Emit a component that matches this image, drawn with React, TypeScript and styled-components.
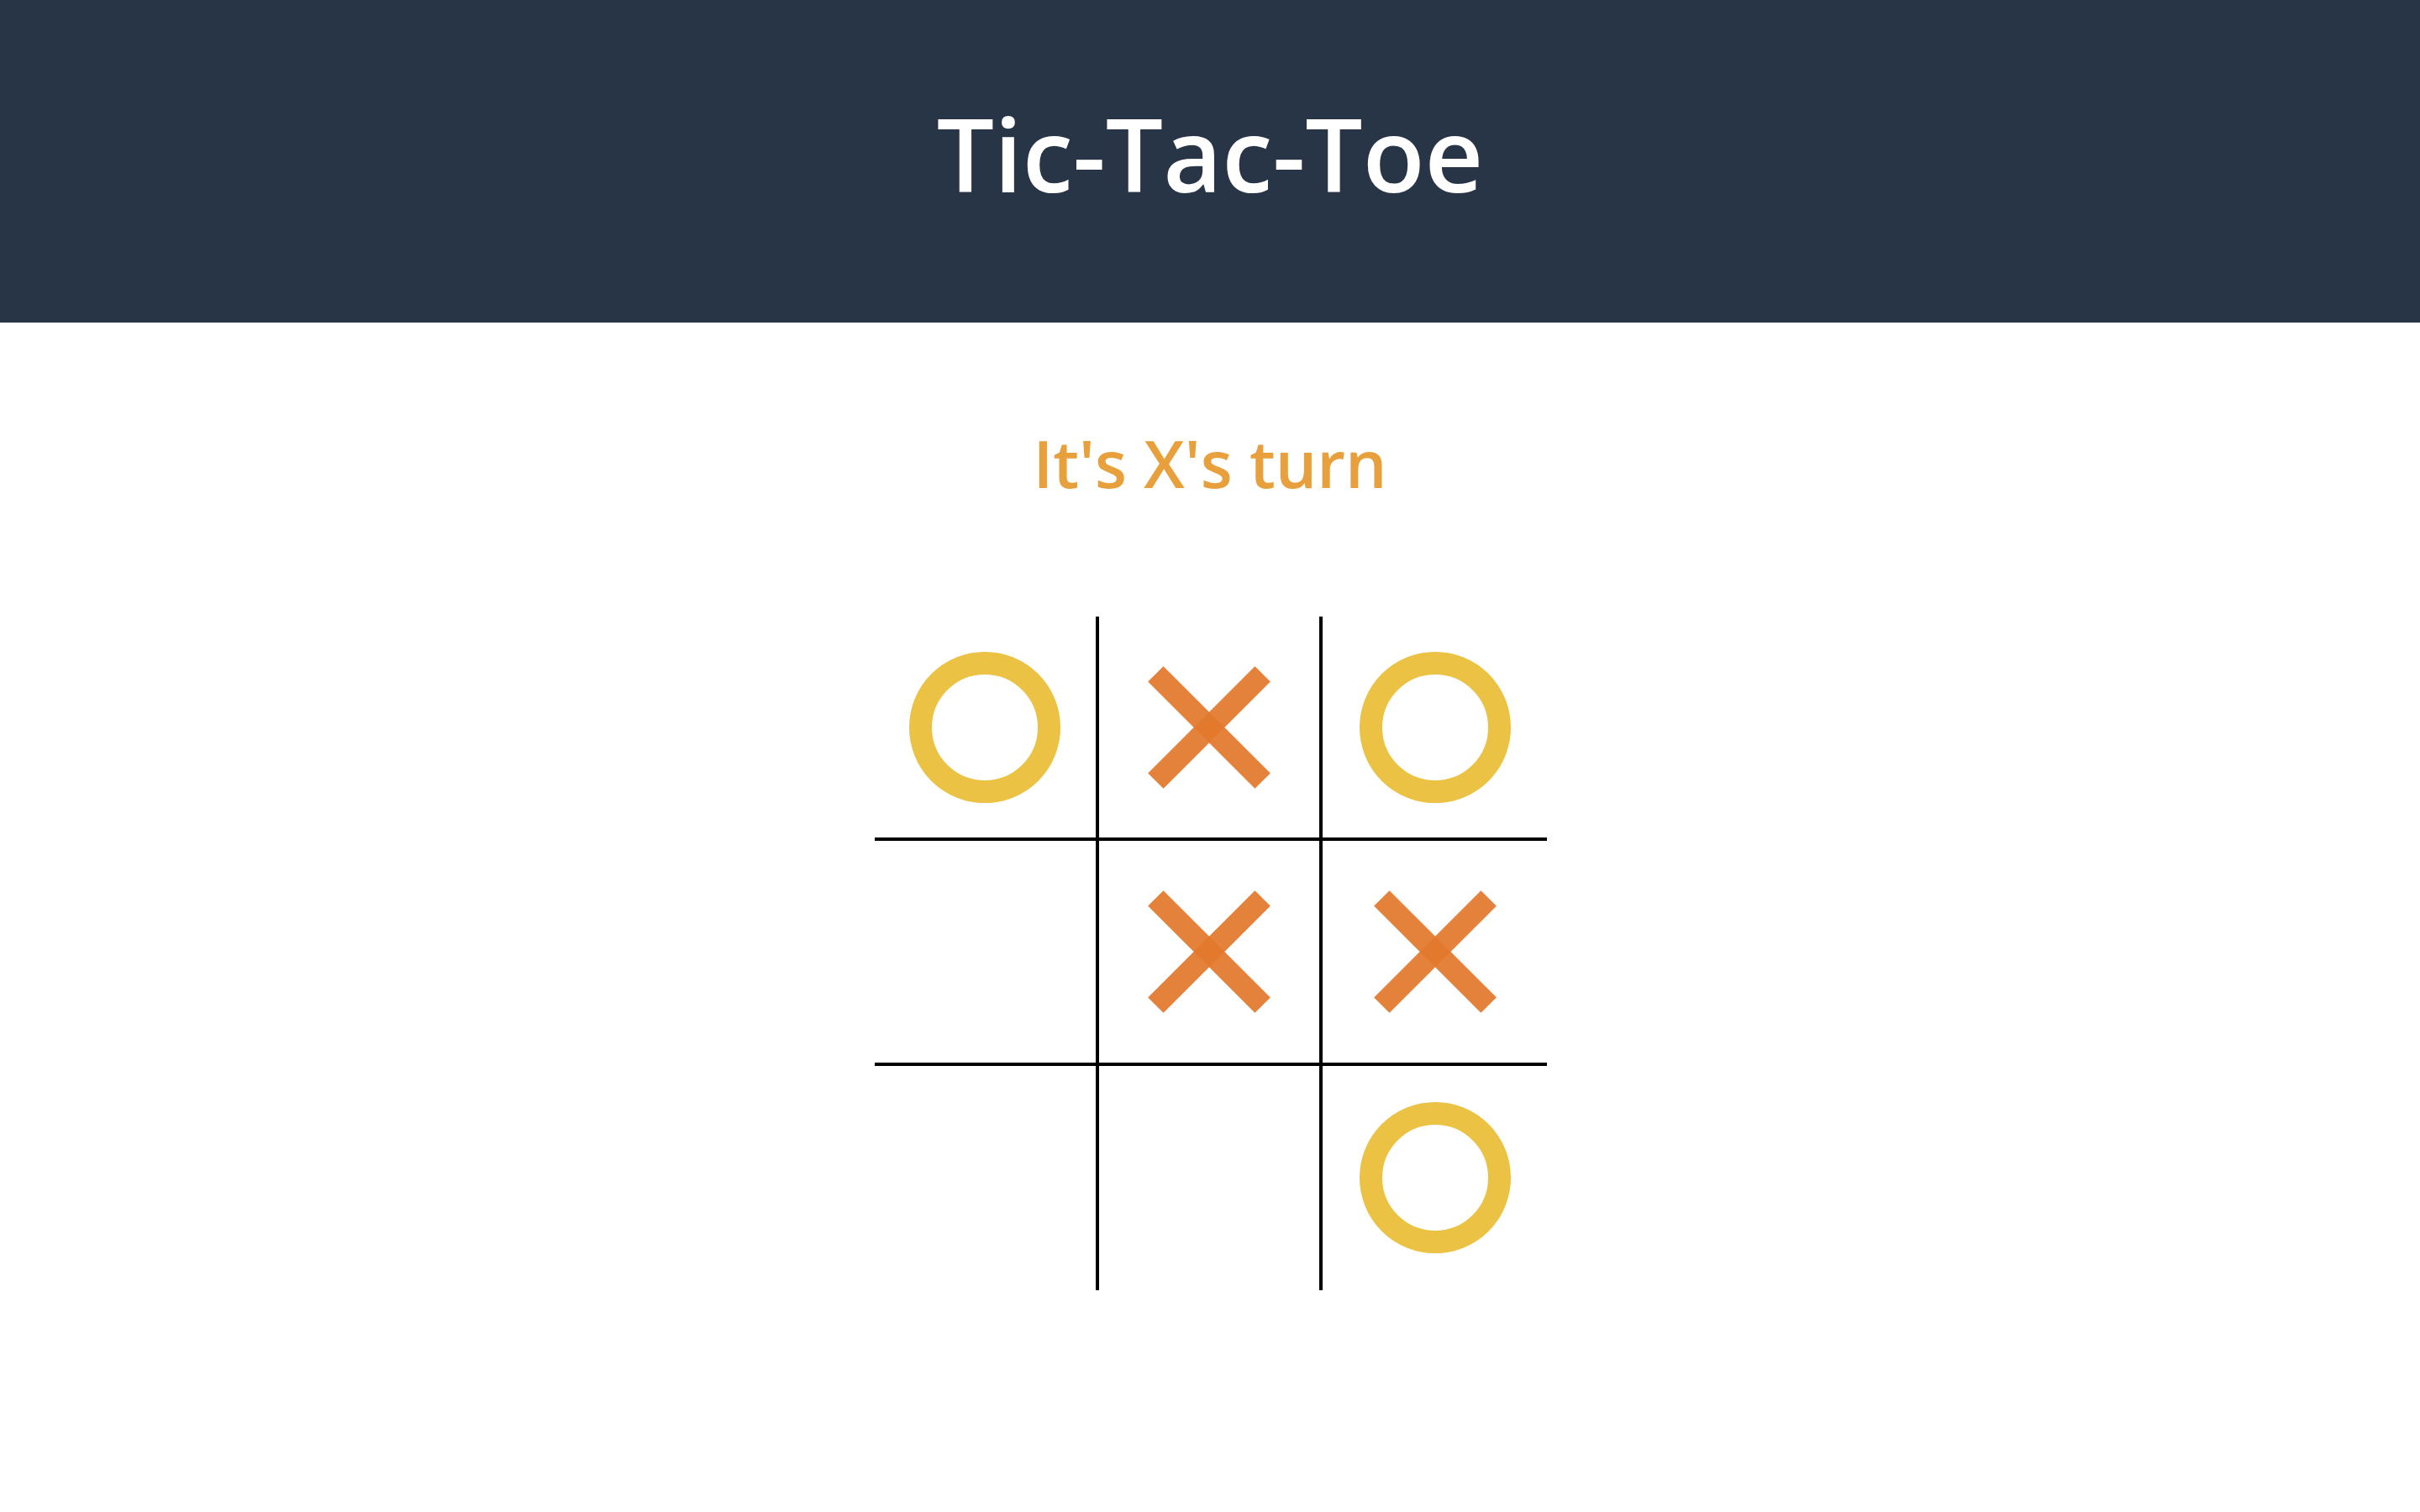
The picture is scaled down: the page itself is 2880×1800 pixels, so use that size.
import React from "react";
import styled, { createGlobalStyle } from "styled-components";

const GlobalStyle = createGlobalStyle`
  html, body {
    margin: 0;
    padding: 0;
    background: #ffffff;
  }
  body {
    font-family: "Open Sans", "Liberation Sans", sans-serif;
  }
`;

const Page = styled.div`
  display: flex;
  flex-direction: column;
  align-items: center;
  min-height: 100vh;
`;

const Header = styled.header`
  align-self: stretch;
  height: 384px;
  box-sizing: border-box;
  padding-top: 100px;
  background: #283546;
  display: flex;
  justify-content: center;
  align-items: flex-start;
`;

const Title = styled.h1`
  margin: 0;
  font-family: "Open Sans", "Liberation Sans", sans-serif;
  font-size: 121px;
  font-weight: 600;
  line-height: normal;
  color: #ffffff;
`;

const Status = styled.p`
  margin: 114px 0 0;
  font-family: "Open Sans", "Liberation Sans", sans-serif;
  font-size: 78px;
  font-weight: 600;
  line-height: normal;
  color: #e8a03c;
`;

const Board = styled.div`
  margin-top: 130px;
  margin-left: 2px;
  width: 800px;
  height: 802px;
  display: grid;
  grid-template-columns: repeat(3, 1fr);
  grid-template-rows: repeat(3, 1fr);
`;

const Cell = styled.div<{ $right: boolean; $bottom: boolean }>`
  position: relative;
  box-sizing: border-box;
  display: flex;
  align-items: center;
  justify-content: center;
  border-right: ${(p) => (p.$right ? "4px solid #000" : "none")};
  border-bottom: ${(p) => (p.$bottom ? "4px solid #000" : "none")};
`;

const Ring = styled.div`
  width: 180px;
  height: 180px;
  box-sizing: border-box;
  border: 27px solid #ebc243;
  border-radius: 50%;
`;

const Cross = styled.div`
  position: relative;
  width: 180px;
  height: 180px;
`;

const Bar = styled.span<{ $angle: number }>`
  position: absolute;
  left: 0;
  top: 77px;
  width: 180px;
  height: 26px;
  background: #e2792c;
  opacity: 0.93;
  transform: rotate(${(p) => p.$angle}deg);
`;

type Mark = "X" | "O" | null;

const board: Mark[] = ["O", "X", "O", null, "X", "X", null, null, "O"];

export default function App() {
  return (
    <>
      <GlobalStyle />
      <Page>
        <Header>
          <Title>Tic-Tac-Toe</Title>
        </Header>
        <Status>It's X's turn</Status>
        <Board>
          {board.map((m, i) => (
            <Cell key={i} $right={i % 3 < 2} $bottom={i < 6}>
              {m === "O" && <Ring />}
              {m === "X" && (
                <Cross>
                  <Bar $angle={45} />
                  <Bar $angle={-45} />
                </Cross>
              )}
            </Cell>
          ))}
        </Board>
      </Page>
    </>
  );
}
